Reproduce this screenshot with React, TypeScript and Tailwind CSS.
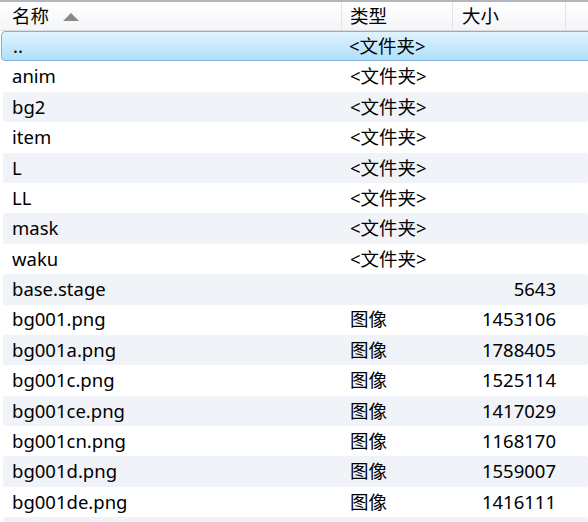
import React from "react";

const rows: [string, string, string][] = [
  ["..", "<文件夹>", ""],
  ["anim", "<文件夹>", ""],
  ["bg2", "<文件夹>", ""],
  ["item", "<文件夹>", ""],
  ["L", "<文件夹>", ""],
  ["LL", "<文件夹>", ""],
  ["mask", "<文件夹>", ""],
  ["waku", "<文件夹>", ""],
  ["base.stage", "", "5643"],
  ["bg001.png", "图像", "1453106"],
  ["bg001a.png", "图像", "1788405"],
  ["bg001c.png", "图像", "1525114"],
  ["bg001ce.png", "图像", "1417029"],
  ["bg001cn.png", "图像", "1168170"],
  ["bg001d.png", "图像", "1559007"],
  ["bg001de.png", "图像", "1416111"],
  ["", "", ""],
];

const font = { fontFamily: '"Noto Sans", "Noto Sans CJK SC", sans-serif' };

export default function App() {
  return (
    <div className="w-[588px] h-[522px] overflow-hidden bg-white text-[18.5px] text-black" style={font}>
      <div className="h-[2px] bg-[#b4b6bc]" />
      <div className="flex h-[29px] bg-gradient-to-b from-white to-[#f4f5f7] border-b border-[#dcdde0]">
        <div className="w-[342px] flex items-center pl-[12px] border-r border-[#e3e4e6]">
          <span>名称</span>
          <svg width="16" height="9" viewBox="0 0 16 9" className="ml-[14px]">
            <polygon points="0,9 8,1 16,9" fill="#8a8a8a" />
          </svg>
        </div>
        <div className="w-[111px] flex items-center pl-[8px] border-r border-[#e3e4e6]">类型</div>
        <div className="w-[113px] flex items-center pl-[9px] border-r border-[#e3e4e6]">大小</div>
        <div className="flex-1" />
      </div>
      <div className="flex flex-col">
        {rows.map((r, i) => {
          const selected = i === 0;
          const gray = !selected && i % 2 === 0;
          return (
            <div
              key={i}
              className={
                "flex items-center h-[30.4px] " +
                (selected
                  ? "ml-[1px] -mr-[4px] rounded-l-[4px] border border-[#86aedd] bg-gradient-to-b from-[#e0f3fd] to-[#ade0fa]"
                  : gray
                  ? "ml-[3px] rounded-[3px] bg-[#f0f3f8]"
                  : "ml-[3px]")
              }
            >
              <div className={"w-[338px] leading-none " + (selected ? "pl-[11px]" : "pl-[9px]")}>{r[0]}</div>
              <div className="w-[111px] pl-[9px] leading-none">{r[1]}</div>
              <div className="w-[104px] text-right leading-none">{r[2]}</div>
            </div>
          );
        })}
      </div>
    </div>
  );
}
